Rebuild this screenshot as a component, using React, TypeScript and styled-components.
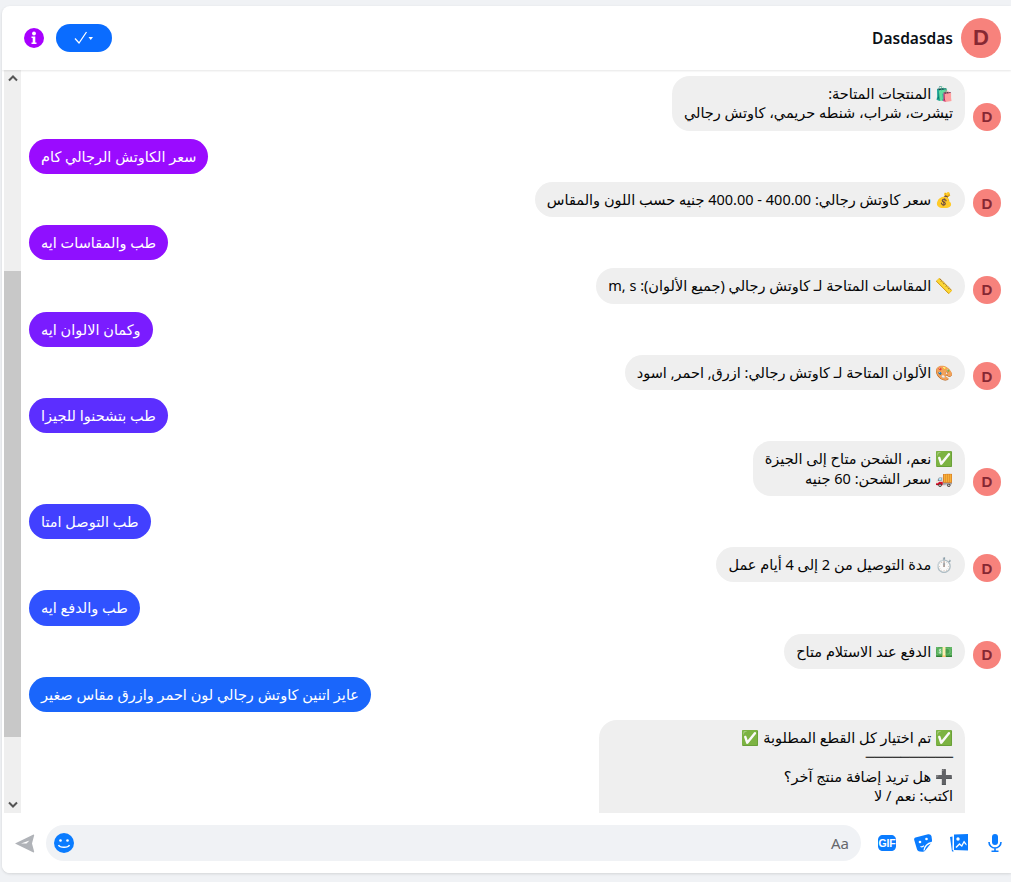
import React, { FC } from "react";
import styled, { createGlobalStyle } from "styled-components";

const GlobalStyle = createGlobalStyle`
    html, body {
        margin: 0;
        padding: 0;
        height: 100%;
        background: #f0f2f5;
        font-family: "Noto Sans", "DejaVu Sans", sans-serif;
    }
    #root {
        height: 100%;
    }
`;

const Page = styled.div`
    box-sizing: border-box;
    height: 882px;
    padding: 6px 0 9px 2px;
`;

const Card = styled.div`
    display: flex;
    flex-direction: column;
    height: 100%;
    background: #fff;
    border-radius: 8px 0 0 8px;
    box-shadow: 0 1px 3px rgba(0, 0, 0, 0.12);
    overflow: hidden;
`;

const Header = styled.header`
    display: flex;
    flex: none;
    align-items: center;
    justify-content: space-between;
    box-sizing: border-box;
    height: 64px;
    padding: 0 10px 0 22px;
    box-shadow: 0 1px 2px rgba(0, 0, 0, 0.1);
    position: relative;
    z-index: 1;
`;

const HeaderTools = styled.div`
    display: flex;
    align-items: center;
    gap: 12px;
`;

const StatusButton = styled.button`
    display: flex;
    align-items: center;
    justify-content: center;
    width: 56px;
    height: 28px;
    padding: 0;
    border: 0;
    border-radius: 14px;
    background: #0a6cff;
`;

const Contact = styled.div`
    display: flex;
    align-items: center;
    gap: 8px;
`;

const ContactName = styled.span`
    font-size: 15.5px;
    font-weight: 600;
    color: #0b1016;
`;

const Avatar = styled.div<{ $size: number }>`
    display: flex;
    flex: none;
    align-items: center;
    justify-content: center;
    width: ${({ $size }) => $size}px;
    height: ${({ $size }) => $size}px;
    border-radius: 50%;
    background: #f7827c;
    color: #862833;
    font-family: "Liberation Sans", sans-serif;
    font-size: ${({ $size }) => ($size > 30 ? 22 : 15)}px;
    font-weight: 700;
`;

const AvatarSpacer = styled.div`
    flex: none;
    width: 28px;
`;

const Body = styled.div`
    display: flex;
    flex: 1;
    min-height: 0;
    padding-left: 2px;
`;

const ScrollBar = styled.div`
    display: flex;
    flex: none;
    flex-direction: column;
    align-items: center;
    width: 17px;
    background: #efefef;
`;

const ScrollArrow = styled.div`
    display: flex;
    flex: none;
    align-items: center;
    justify-content: center;
    width: 100%;
    height: 17px;
`;

const ScrollTrack = styled.div`
    flex: 1;
    width: 100%;
    padding-top: 184px;
    padding-bottom: 59px;
    box-sizing: border-box;
`;

const ScrollThumb = styled.div`
    height: 100%;
    background: #c8c8c8;
`;

const Messages = styled.div`
    display: flex;
    flex: 1;
    flex-direction: column;
    gap: 8px;
    min-width: 0;
    padding: 6px 10px 0 8px;
    overflow: hidden;
`;

const IncomingRow = styled.div`
    display: flex;
    flex: none;
    align-items: flex-end;
    justify-content: flex-end;
    gap: 8px;
`;

const OutgoingRow = styled.div`
    display: flex;
    flex: none;
    justify-content: flex-start;
`;

const Bubble = styled.div`
    box-sizing: border-box;
    padding: 8px 12px;
    border-radius: 18px;
    font-size: 14.5px;
    line-height: 19.25px;
`;

const IncomingBubble = styled(Bubble) <{ $wide?: boolean }>`
    width: ${({ $wide }) => ($wide ? "366px" : "auto")};
    min-height: ${({ $wide }) => ($wide ? "130px" : "0")};
    background: #efefef;
    color: #050505;
`;

const OutgoingBubble = styled(Bubble) <{ $color: string }>`
    background: ${({ $color }) => $color};
    color: #fff;
`;

const Line = styled.div`
    direction: rtl;
    height: 19.25px;
    white-space: nowrap;
`;

const Footer = styled.footer`
    display: flex;
    flex: none;
    align-items: center;
    box-sizing: border-box;
    height: 60px;
    padding: 0 9px 0 13px;
    background: #fff;
`;

const SendIcon = styled.svg`
    flex: none;
    width: 20px;
    height: 20px;
    margin-right: 11px;
`;

const InputBox = styled.div`
    display: flex;
    flex: 1;
    align-items: center;
    justify-content: space-between;
    height: 36px;
    padding: 0 12px 0 8px;
    border-radius: 18px;
    background: #f0f2f5;
`;

const Placeholder = styled.span`
    font-size: 15px;
    color: #65676b;
`;

const FooterActions = styled.div`
    display: flex;
    flex: none;
    align-items: center;
    gap: 18px;
    margin-left: 17px;
`;

const MicIcon = styled.svg`
    width: 14px;
    height: 18px;
    margin-left: 2px;
`;

const GifLabel = styled.text`
    font-family: "Liberation Sans", sans-serif;
    font-size: 10.5px;
    font-weight: 700;
    letter-spacing: -0.2px;
    fill: #fff;
`;

type Message =
    | { from: "page"; lines: string[]; wide?: boolean }
    | { from: "user"; color: string; text: string };

const messages: Message[] = [
    { from: "page", lines: ["🛍️ المنتجات المتاحة:", "تيشرت، شراب، شنطه حريمي، كاوتش رجالي"] },
    { from: "user", color: "#9a0bff", text: "سعر الكاوتش الرجالي كام" },
    { from: "page", lines: ["💰 سعر كاوتش رجالي: 400.00 - 400.00 جنيه حسب اللون والمقاس"] },
    { from: "user", color: "#8f10ff", text: "طب والمقاسات ايه" },
    { from: "page", lines: ["📏 المقاسات المتاحة لـ كاوتش رجالي (جميع الألوان): m, s"] },
    { from: "user", color: "#7a1cff", text: "وكمان الالوان ايه" },
    { from: "page", lines: ["🎨 الألوان المتاحة لـ كاوتش رجالي: ازرق, احمر, اسود"] },
    { from: "user", color: "#5c2eff", text: "طب بتشحنوا للجيزا" },
    { from: "page", lines: ["✅ نعم، الشحن متاح إلى الجيزة", "🚚 سعر الشحن: 60 جنيه"] },
    { from: "user", color: "#4240ff", text: "طب التوصل امتا" },
    { from: "page", lines: ["⏱️ مدة التوصيل من 2 إلى 4 أيام عمل"] },
    { from: "user", color: "#3052ff", text: "طب والدفع ايه" },
    { from: "page", lines: ["💵 الدفع عند الاستلام متاح"] },
    { from: "user", color: "#1a66fb", text: "عايز اتنين كاوتش رجالي لون احمر وازرق مقاس صغير" },
    {
        from: "page",
        wide: true,
        lines: ["✅ تم اختيار كل القطع المطلوبة ✅", "──────────", "➕ هل تريد إضافة منتج آخر؟", "اكتب: نعم / لا"],
    },
];

const Chevron: FC<{ up?: boolean }> = ({ up }) => (
    <svg width="10" height="7" viewBox="0 0 10 7">
        <path d={up ? "M1 5.500l4-4 4 4" : "M1 1.500l4 4 4-4"} fill="none" stroke="#555" strokeWidth="2" />
    </svg>
);

const App: FC = () => {
    return (
        <Page>
            <GlobalStyle />
            <Card>
                <Header>
                    <HeaderTools>
                        <svg width="20" height="20" viewBox="0 0 20 20">
                            <circle cx="10" cy="10" r="10" fill="#a800ff" />
                            <circle cx="10" cy="5.500" r="1.900" fill="#fff" />
                            <path d="M7.500 8.500h3.800v6h1.200V16h-5v-1.500h1.200v-4.500H7.500z" fill="#fff" />
                        </svg>
                        <StatusButton>
                            <svg width="20" height="14" viewBox="0 0 20 14">
                                <path d="M1 7.500L5 12 12.500 1" fill="none" stroke="#fff" strokeWidth="1.300" />
                                <path d="M14.500 6h4.500l-2.250 3z" fill="#fff" />
                            </svg>
                        </StatusButton>
                    </HeaderTools>
                    <Contact>
                        <ContactName>Dasdasdas</ContactName>
                        <Avatar $size={40}>D</Avatar>
                    </Contact>
                </Header>
                <Body>
                    <ScrollBar>
                        <ScrollArrow><Chevron up /></ScrollArrow>
                        <ScrollTrack><ScrollThumb /></ScrollTrack>
                        <ScrollArrow><Chevron /></ScrollArrow>
                    </ScrollBar>
                    <Messages>
                        {messages.map((message, index) =>
                            message.from === "user" ? (
                                <OutgoingRow key={index}>
                                    <OutgoingBubble $color={message.color}>
                                        <Line>{message.text}</Line>
                                    </OutgoingBubble>
                                </OutgoingRow>
                            ) : (
                                <IncomingRow key={index}>
                                    <IncomingBubble $wide={message.wide}>
                                        {message.lines.map((line, lineIndex) => (
                                            <Line key={lineIndex}>{line}</Line>
                                        ))}
                                    </IncomingBubble>
                                    {message.wide ? <AvatarSpacer /> : <Avatar $size={28}>D</Avatar>}
                                </IncomingRow>
                            )
                        )}
                    </Messages>
                </Body>
                <Footer>
                    <SendIcon viewBox="0 0 20 20">
                        <path d="M0 10.500L18.500 1.500c.5 0 .8.300.7.800L17 10.500l2.200 8.200c.1.500-.2.800-.7.800z" fill="#b0b3b8" />
                        <path d="M6 10.500l8.500-3-3 3z" fill="#fff" />
                    </SendIcon>
                    <InputBox>
                        <svg width="20" height="20" viewBox="0 0 20 20">
                            <circle cx="10" cy="10" r="10" fill="#0a7cff" />
                            <circle cx="6.500" cy="7.500" r="1.300" fill="#fff" />
                            <circle cx="13.500" cy="7.500" r="1.300" fill="#fff" />
                            <path d="M4.500 12c1.500 3 9.500 3 11 0" fill="none" stroke="#fff" strokeWidth="1.500" />
                        </svg>
                        <Placeholder>Aa</Placeholder>
                    </InputBox>
                    <FooterActions>
                        <svg width="18" height="18" viewBox="0 0 18 18">
                            <path d="M5 1h8c3 0 5 2 5 5v6c0 3-2 5-5 5H5c-3 0-5-2-5-5V6c0-3 2-5 5-5z" fill="#0a7cff" />
                            <GifLabel x="9" y="13" textAnchor="middle">GIF</GifLabel>
                        </svg>
                        <svg width="18" height="18" viewBox="0 0 18 18">
                            <path d="M1.500 3.500L14 .3c1.700-.4 3 .4 3.500 2l.5 3.700c.2 1.200-.1 2-.8 3l-6 7.500c-.8 1-1.800 1.500-3 1.300l-2.500-.3c-1.400-.2-2.400-1-2.800-2.500L.2 6c-.3-1.200.2-2.100 1.300-2.500z" fill="#0a7cff" />
                            <circle cx="6" cy="8" r="1.300" fill="#fff" />
                            <circle cx="12.500" cy="5" r="1.300" fill="#fff" />
                            <path d="M6.500 12.500c1.300.6 2.500.3 3.300-.8M10 16.500c.5-4 3-7 8-8" fill="none" stroke="#fff" strokeWidth="1.300" />
                        </svg>
                        <svg width="18" height="18" viewBox="0 0 18 18">
                            <path d="M0 3l2.500-.6v13.400l1.500 1.500-2 .3z" fill="#0a7cff" />
                            <path d="M4 .5L18 0v16.500L4 16z" fill="#0a7cff" />
                            <circle cx="8" cy="5" r="1.700" fill="#fff" />
                            <path d="M5.500 13l4-4 2 2 2.500-4.500 2.500 3.500v1.500l-2.500-2.500-2 4-2.500-2-3 3z" fill="#fff" />
                        </svg>
                        <MicIcon viewBox="0 0 14 18">
                            <rect x="4" y="0" width="6" height="11" rx="3" fill="#0a7cff" />
                            <path d="M1 8a6 6 0 0 0 12 0M7 14v3M3.500 17.200h7" fill="none" stroke="#0a7cff" strokeWidth="1.600" />
                        </MicIcon>
                    </FooterActions>
                </Footer>
            </Card>
        </Page>
    );
};

export default App;
